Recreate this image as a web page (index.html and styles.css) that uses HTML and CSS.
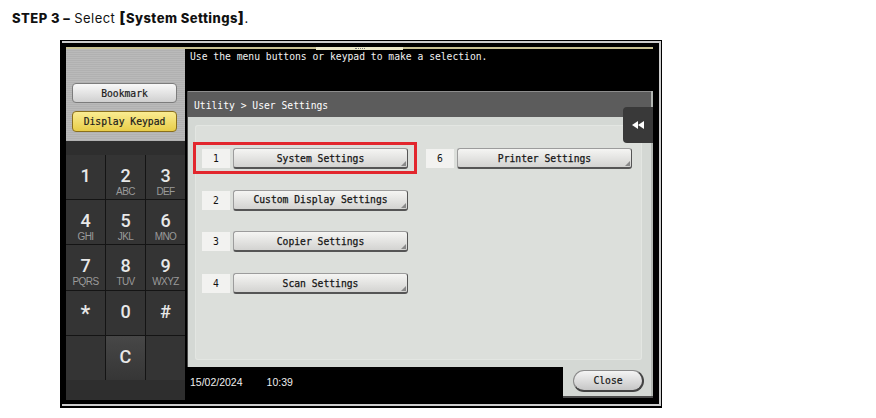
FILE: index.html
```html
<!DOCTYPE html>
<html lang="en">
<head>
    <meta charset="UTF-8">
    <meta name="viewport" content="width=device-width, initial-scale=1.0">
    <title>Step 3 - System Settings</title>
    <link rel="stylesheet" href="styles.css">
</head>
<body>
    <p class="step"><strong>STEP 3 –</strong> Select <strong class="target"><span class="br">[</span>System Settings<span class="br">]</span></strong>.</p>

    <div class="device">
        <div class="frame">
            <div class="gold"><span class="gold-tab"><i></i></span></div>
            <div class="unit">
                <aside class="side">
                    <div class="side-top">
                        <button class="side-btn">Bookmark</button>
                        <button class="side-btn keypad-on">Display Keypad</button>
                    </div>
                    <div class="key-strip"></div>
                    <div class="keypad">
                        <div class="key"><span class="num">1</span></div>
                        <div class="key"><span class="num">2</span><span class="abc">ABC</span></div>
                        <div class="key"><span class="num">3</span><span class="abc">DEF</span></div>
                        <div class="key"><span class="num">4</span><span class="abc">GHI</span></div>
                        <div class="key"><span class="num">5</span><span class="abc">JKL</span></div>
                        <div class="key"><span class="num">6</span><span class="abc">MNO</span></div>
                        <div class="key"><span class="num">7</span><span class="abc">PQRS</span></div>
                        <div class="key"><span class="num">8</span><span class="abc">TUV</span></div>
                        <div class="key"><span class="num">9</span><span class="abc">WXYZ</span></div>
                        <div class="key"><span class="num star">*</span></div>
                        <div class="key"><span class="num">0</span></div>
                        <div class="key"><span class="num">#</span></div>
                        <div class="key"></div>
                        <div class="key key-c"><span class="num">C</span></div>
                        <div class="key"></div>
                    </div>
                    <div class="key-strip foot"></div>
                </aside>

                <section class="screen">
                    <div class="message">Use the menu buttons or keypad to make a selection.</div>
                    <div class="panel">
                        <div class="panel-head">Utility &gt; User Settings</div>
                        <button class="back">
                            <svg width="12" height="8" viewBox="0 0 12 8"><polygon points="0,4 6,0 6,8" fill="#fff"/><polygon points="6,4 12,0 12,8" fill="#fff"/></svg>
                        </button>
                        <div class="panel-body">
                            <div class="menu">
                                <div class="item selected"><span class="item-num">1</span><button class="item-btn">System Settings</button></div>
                                <div class="item"><span class="item-num">2</span><button class="item-btn">Custom Display Settings</button></div>
                                <div class="item"><span class="item-num">3</span><button class="item-btn">Copier Settings</button></div>
                                <div class="item"><span class="item-num">4</span><button class="item-btn">Scan Settings</button></div>
                                <div class="item"><span class="item-num">6</span><button class="item-btn">Printer Settings</button></div>
                            </div>
                        </div>
                    </div>
                    <div class="status">
                        <span class="stamp">15/02/2024</span>
                        <span class="stamp time">10:39</span>
                        <div class="close-tab"><button class="close">Close</button></div>
                    </div>
                </section>
            </div>
        </div>
    </div>
</body>
</html>
```

FILE: styles.css
```css
body {
    margin: 0;
    background-color: #ffffff;
    font-family: 'Inter', 'Liberation Sans', sans-serif;
}
.step {
    margin: 0;
    height: 40px;
    box-sizing: border-box;
    padding: 9px 12px 0;
    font-size: 13px;
    line-height: 16px;
    letter-spacing: 0.45px;
    color: #111111;
}
.step strong {
    font-weight: 800;
}
.target .br {
    font-size: 16px;
    font-weight: 800;
}

/* printer panel */
.device {
    width: 602px;
    height: 368px;
    margin-left: 60px;
    padding: 1px 1px 2px 2px;
    box-sizing: border-box;
    background-color: #000000;
}
.frame {
    height: 100%;
    box-sizing: border-box;
    border: 2px solid #cdcdcd;
    border-left: 0;
    padding: 4px 6px 4px 4px;
    display: flex;
    flex-direction: column;
}
.gold {
    height: 2px;
    background-color: #c9c293;
    display: flex;
    justify-content: center;
}
.gold-tab {
    width: 87px;
    height: 3px;
    background-color: #ebe8c8;
    display: flex;
    justify-content: center;
    align-items: center;
}
.gold-tab i {
    width: 10px;
    border-top: 1px dotted #777777;
}
.unit {
    flex: 1;
    min-height: 0;
    display: flex;
    gap: 2px;
}

/* left column */
.side {
    width: 119px;
    display: flex;
    flex-direction: column;
}
.side-top {
    height: 92px;
    box-sizing: border-box;
    padding: 34px 0 0 6px;
    display: flex;
    flex-direction: column;
    gap: 8px;
    background: repeating-linear-gradient(#bababa 0 1px, #b1b1b1 1px 2px);
}
.side-btn {
    width: 105px;
    height: 20px;
    padding: 0;
    border: 1px solid #7c7c7c;
    border-radius: 4px;
    background: linear-gradient(#f8f8f8, #d0d0d0);
    color: #1a1a1a;
    font-family: 'DejaVu Sans Mono', monospace;
    font-size: 9.7px;
    -webkit-text-stroke: 0.2px #1a1a1a;
}
.side-btn.keypad-on {
    height: 21px;
    border-color: #8a6f1c;
    background: linear-gradient(#faec92, #e8cd48);
}
.key-strip {
    height: 14px;
    background-color: #2e2e2e;
}
.key-strip.foot {
    height: 20px;
}
.keypad {
    display: grid;
    grid-template-columns: repeat(3, 1fr);
    grid-template-rows: repeat(5, 44.2px);
    gap: 1px;
    background-color: #141414;
}
.key {
    background-color: #343434;
    color: #e8e8e8;
    display: flex;
    flex-direction: column;
    align-items: center;
    padding-top: 11px;
    box-sizing: border-box;
}
.key-c {
    background: linear-gradient(#474747, #363636);
}
.num {
    font-family: 'Roboto', 'Liberation Sans', sans-serif;
    font-weight: 500;
    font-size: 18px;
    line-height: 20px;
}
.num.star {
    font-size: 22px;
    line-height: 24px;
}
.abc {
    font-family: 'Liberation Sans', sans-serif;
    font-size: 10px;
    line-height: 11px;
    color: #9a9a9a;
    letter-spacing: -0.6px;
}

/* main screen */
.screen {
    flex: 1;
    display: flex;
    flex-direction: column;
    font-family: 'DejaVu Sans Mono', monospace;
    font-size: 9.7px;
}
.message {
    height: 42px;
    box-sizing: border-box;
    padding: 2px 0 0 3px;
    line-height: 12px;
    color: #f2f2f2;
}
.panel {
    flex: 1;
    position: relative;
    display: flex;
    flex-direction: column;
    border-left: 1px solid #4a4a4a;
    border-right: 2px solid #b2b6b2;
}
.panel-head {
    height: 26px;
    box-sizing: border-box;
    padding: 3px 0 0 6px;
    line-height: 22px;
    border-top: 1px solid #8d8d8d;
    background-color: #5c5c5c;
    color: #ffffff;
}
.back {
    position: absolute;
    top: 16px;
    right: -2px;
    width: 30px;
    height: 36px;
    padding: 0;
    border: 0;
    border-radius: 4px 0 0 4px;
    background-color: #393939;
    display: flex;
    align-items: center;
    justify-content: center;
}
.panel-body {
    flex: 1;
    display: flex;
    padding: 8px 9px 7px 7px;
    background-color: #d4d8d4;
}
.menu {
    flex: 1;
    display: grid;
    grid-template-columns: 206px 206px;
    grid-template-rows: repeat(4, 21px);
    grid-auto-flow: column;
    row-gap: 20.7px;
    column-gap: 18px;
    align-content: start;
    padding: 23px 0 0 7px;
    border-radius: 3px;
    background-color: #dcdfdb;
    box-shadow: inset 0 0 0 1px #e3e6e2;
}
.item {
    display: flex;
    gap: 3px;
    position: relative;
}
.item.selected::after {
    content: "";
    position: absolute;
    inset: -6px -9px -5px -9px;
    border: 3px solid #e2262d;
}
.item-num {
    width: 28px;
    height: 19px;
    margin-top: 1px;
    display: flex;
    align-items: center;
    justify-content: center;
    background-color: #f2f2f0;
    color: #111111;
}
.item-btn {
    position: relative;
    width: 175px;
    height: 21px;
    padding: 0;
    border: 1px solid #9c9c9c;
    border-right-color: #555555;
    border-bottom: 2px solid #555555;
    border-radius: 3px;
    background: linear-gradient(#f5f5f3, #d3d3d1);
    color: #151515;
    font-family: inherit;
    font-size: inherit;
    -webkit-text-stroke: 0.25px #151515;
}
.item-btn::after {
    content: "";
    position: absolute;
    right: 1px;
    bottom: 1px;
    border-left: 5px solid transparent;
    border-bottom: 5px solid #8a8a8a;
}

/* status line */
.status {
    height: 33px;
    display: flex;
    align-items: flex-start;
    font-family: 'Liberation Sans', sans-serif;
    font-size: 10.5px;
    line-height: 12px;
    color: #eeeeee;
}
.stamp {
    padding: 9px 0 0 3px;
}
.stamp.time {
    margin-left: 21px;
}
.close-tab {
    margin-left: auto;
    width: 90px;
    height: 29px;
    box-sizing: border-box;
    padding: 3px 0 0 10px;
    background-color: #d4d8d4;
    border-right: 2px solid #b2b6b2;
    box-shadow: 0 2px 0 #4a4a4a;
}
.close {
    width: 71px;
    height: 22px;
    padding: 0;
    border: 1px solid #8a8a8a;
    border-right: 2px solid #444444;
    border-bottom: 2px solid #444444;
    border-radius: 11px;
    background: linear-gradient(#f4f4f4, #c6c6c6);
    color: #151515;
    font-family: 'DejaVu Sans Mono', monospace;
    font-size: 9.7px;
    -webkit-text-stroke: 0.2px #151515;
}
```
